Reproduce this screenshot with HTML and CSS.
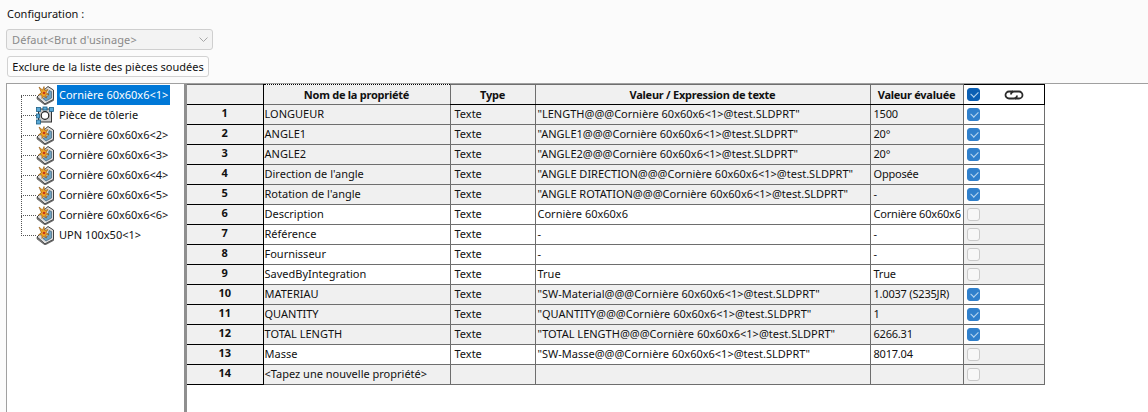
FILE: index.html
```html
<!DOCTYPE html>
<html lang="fr">
<head>
  <meta charset="UTF-8">
  <title>Propriétés de la liste des pièces soudées</title>
  <link rel="stylesheet" href="styles.css">
</head>
<body>
  <svg class="defs" width="0" height="0">
    <symbol id="weld" viewBox="0 0 20 20">
      <path d="M1 12 L9 19 L17.500 14.500 L17.500 5 L12 1.500 L8 5 Z" fill="#dcdcdc" stroke="#3f3f3f" stroke-width="1"/>
      <path d="M13 5.500 L15.500 6.500 L15.500 13 L10 16 L7 13.500 L12 11 Z" fill="#6fa3c2" stroke="#35566c" stroke-width=".6"/>
      <path d="M1 12 L1 14 L9 20 L17.500 15.500 L17.500 14.500 L9 19 Z" fill="#8a8a8a" stroke="#3f3f3f" stroke-width=".6"/>
      <path d="M3 2 L6.500 5 L8 1.500 L8.800 5.500 L12 4.500 L10 7.500 L13 9.500 L9.800 9.800 L10.500 13 L8 11 L6 13.500 L5.800 10 L2.500 10 L5.300 7.500 Z" fill="#f0a426" stroke="#8f5410" stroke-width=".6"/>
      <circle cx="8" cy="8" r="1.300" fill="#c33a1c"/>
    </symbol>
    <symbol id="sheet" viewBox="0 0 20 20">
      <rect x="2.500" y="4" width="13" height="13" fill="#c9c9c9" stroke="#333"/>
      <circle cx="9" cy="10.500" r="3.800" fill="#fff" stroke="#222" stroke-width="1.200"/>
      <g fill="#5aa8d6" stroke="#1d5f86" stroke-width=".8">
        <rect x=".5" y="2.500" width="4" height="4"/>
        <rect x="7" y="2" width="4" height="3"/>
        <rect x="13.500" y="2.500" width="4" height="4"/>
        <rect x=".5" y="9" width="3" height="4"/>
        <rect x=".5" y="15" width="4" height="4"/>
      </g>
    </symbol>
  </svg>

  <section class="config">
    <div class="config-label">Configuration :</div>
    <div class="select">
      <span>Défaut&lt;Brut d'usinage&gt;</span>
      <svg class="chevron" width="9" height="6" viewBox="0 0 9 6"><path d="M.5 .5 L4.500 4.500 L8.500 .5" fill="none" stroke="#a6a6a6"/></svg>
    </div>
    <button class="btn" type="button">Exclure de la liste des pièces soudées</button>
  </section>

  <main class="main">
    <ul class="tree">
      <li class="node first"><span class="branch"></span><svg class="icon"><use href="#weld"/></svg><span class="label selected">Cornière 60x60x6&lt;1&gt;</span></li>
      <li class="node"><span class="branch"></span><svg class="icon"><use href="#sheet"/></svg><span class="label">Pièce de tôlerie</span></li>
      <li class="node"><span class="branch"></span><svg class="icon"><use href="#weld"/></svg><span class="label">Cornière 60x60x6&lt;2&gt;</span></li>
      <li class="node"><span class="branch"></span><svg class="icon"><use href="#weld"/></svg><span class="label">Cornière 60x60x6&lt;3&gt;</span></li>
      <li class="node"><span class="branch"></span><svg class="icon"><use href="#weld"/></svg><span class="label">Cornière 60x60x6&lt;4&gt;</span></li>
      <li class="node"><span class="branch"></span><svg class="icon"><use href="#weld"/></svg><span class="label">Cornière 60x60x6&lt;5&gt;</span></li>
      <li class="node"><span class="branch"></span><svg class="icon"><use href="#weld"/></svg><span class="label">Cornière 60x60x6&lt;6&gt;</span></li>
      <li class="node last"><span class="branch"></span><svg class="icon"><use href="#weld"/></svg><span class="label">UPN 100x50&lt;1&gt;</span></li>
    </ul>

    <div class="splitter"></div>

    <div class="grid-wrap">
      <table class="grid">
        <colgroup>
          <col class="c-num"><col class="c-name"><col class="c-type"><col class="c-value"><col class="c-eval"><col class="c-check">
        </colgroup>
        <thead>
          <tr>
            <th class="num"></th>
            <th class="focus">Nom de la propriété</th>
            <th>Type</th>
            <th>Valeur / Expression de texte</th>
            <th>Valeur évaluée</th>
            <th class="check-head">
              <div class="check-head-in">
                <span class="box head-on"></span>
                <svg class="link" width="20" height="10" viewBox="0 0 20 10">
                  <path d="M9 1.500 H5 A3.500 3.500 0 0 0 5 8.500 H10 A3 3 0 0 0 13 5.500" fill="none" stroke="#2b2b2b" stroke-width="1.800"/>
                  <path d="M11 8.500 H15 A3.500 3.500 0 0 0 15 1.500 H10 A3 3 0 0 0 7 4.500" fill="none" stroke="#2b2b2b" stroke-width="1.800"/>
                </svg>
              </div>
            </th>
          </tr>
        </thead>
        <tbody>
          <tr class="on"><th class="num">1</th><td>LONGUEUR</td><td>Texte</td><td>"LENGTH@@@Cornière 60x60x6&lt;1&gt;@test.SLDPRT"</td><td>1500</td><td class="chk"><span class="box"></span></td></tr>
          <tr class="on"><th class="num">2</th><td>ANGLE1</td><td>Texte</td><td>"ANGLE1@@@Cornière 60x60x6&lt;1&gt;@test.SLDPRT"</td><td>20°</td><td class="chk"><span class="box"></span></td></tr>
          <tr class="on"><th class="num">3</th><td>ANGLE2</td><td>Texte</td><td>"ANGLE2@@@Cornière 60x60x6&lt;1&gt;@test.SLDPRT"</td><td>20°</td><td class="chk"><span class="box"></span></td></tr>
          <tr class="on"><th class="num">4</th><td>Direction de l'angle</td><td>Texte</td><td>"ANGLE DIRECTION@@@Cornière 60x60x6&lt;1&gt;@test.SLDPRT"</td><td>Opposée</td><td class="chk"><span class="box"></span></td></tr>
          <tr class="on"><th class="num">5</th><td>Rotation de l'angle</td><td>Texte</td><td>"ANGLE ROTATION@@@Cornière 60x60x6&lt;1&gt;@test.SLDPRT"</td><td>-</td><td class="chk"><span class="box"></span></td></tr>
          <tr class="off"><th class="num">6</th><td>Description</td><td>Texte</td><td>Cornière 60x60x6</td><td>Cornière 60x60x6</td><td class="chk"><span class="box"></span></td></tr>
          <tr class="off"><th class="num">7</th><td>Référence</td><td>Texte</td><td>-</td><td>-</td><td class="chk"><span class="box"></span></td></tr>
          <tr class="off"><th class="num">8</th><td>Fournisseur</td><td>Texte</td><td>-</td><td>-</td><td class="chk"><span class="box"></span></td></tr>
          <tr class="off"><th class="num">9</th><td>SavedByIntegration</td><td>Texte</td><td>True</td><td>True</td><td class="chk"><span class="box"></span></td></tr>
          <tr class="on"><th class="num">10</th><td>MATERIAU</td><td>Texte</td><td>"SW-Material@@@Cornière 60x60x6&lt;1&gt;@test.SLDPRT"</td><td>1.0037 (S235JR)</td><td class="chk"><span class="box"></span></td></tr>
          <tr class="on"><th class="num">11</th><td>QUANTITY</td><td>Texte</td><td>"QUANTITY@@@Cornière 60x60x6&lt;1&gt;@test.SLDPRT"</td><td>1</td><td class="chk"><span class="box"></span></td></tr>
          <tr class="on"><th class="num">12</th><td>TOTAL LENGTH</td><td>Texte</td><td>"TOTAL LENGTH@@@Cornière 60x60x6&lt;1&gt;@test.SLDPRT"</td><td>6266.31</td><td class="chk"><span class="box"></span></td></tr>
          <tr class="off"><th class="num">13</th><td>Masse</td><td>Texte</td><td>"SW-Masse@@@Cornière 60x60x6&lt;1&gt;@test.SLDPRT"</td><td>8017.04</td><td class="chk"><span class="box"></span></td></tr>
          <tr class="new"><th class="num">14</th><td>&lt;Tapez une nouvelle propriété&gt;</td><td></td><td></td><td></td><td class="chk"><span class="box"></span></td></tr>
        </tbody>
      </table>
    </div>
  </main>
</body>
</html>
```

FILE: styles.css
```css
* {
  margin: 0;
  padding: 0;
  box-sizing: border-box;
}

body {
  font-family: "Noto Sans", "Open Sans", Arial, sans-serif;
  font-size: 11px;
  color: #111;
  background-color: #fbfbfb;
  height: 412px;
  overflow: hidden;
}

.defs {
  display: block;
  height: 0;
}

/* top part */
.config {
  height: 83px;
  padding: 6px 0 0 7px;
}

.config-label {
  height: 17px;
  line-height: 16px;
}

.select {
  width: 207px;
  height: 21px;
  margin: 6px 0 0 -1px;
  padding: 0 4px 0 5px;
  display: flex;
  align-items: center;
  justify-content: space-between;
  background-color: #f3f3f3;
  border: 1px solid #cfcfcf;
  border-radius: 3px;
  color: #8a8a8a;
  letter-spacing: 0.1px;
}

.btn {
  display: block;
  width: 202px;
  height: 21px;
  margin-top: 6px;
  font: inherit;
  color: #111;
  background-color: #fdfdfd;
  border: 1px solid #d2d2d2;
  border-radius: 3px;
}

/* tree + table */
.main {
  display: flex;
  height: 329px;
  margin-left: 6px;
  background-color: #fff;
  border-top: 1px solid #a0a0a0;
}

.tree {
  width: 178px;
  padding: 1px 0 0 14px;
  list-style: none;
  border-left: 1px solid #a0a0a0;
}

.node {
  display: flex;
  align-items: center;
  height: 20px;
}

.branch {
  width: 15px;
  height: 20px;
}

.branch::before,
.branch::after {
  content: "";
  display: block;
  height: 10px;
  border-left: 1px dotted #555;
}

.branch::before {
  border-bottom: 1px dotted #555;
}

.first .branch::before,
.last .branch::after {
  border-left: none;
}

.icon {
  width: 20px;
  height: 20px;
  flex: none;
}

.label {
  height: 20px;
  margin-left: 1px;
  padding: 0 2px;
  line-height: 19px;
  white-space: nowrap;
}

.selected {
  width: 113px;
  background-color: #0078d7;
  color: #fff;
}

.splitter {
  width: 3px;
  background-color: #8f8f8f;
}

.grid-wrap {
  flex: 1;
}

.grid {
  width: 857px;
  table-layout: fixed;
  border-collapse: collapse;
}

.c-num { width: 76px; }
.c-name { width: 187px; }
.c-type { width: 85px; }
.c-value { width: 335px; }
.c-eval { width: 93px; }
.c-check { width: 81px; }

.grid th,
.grid td {
  height: 20px;
  padding: 0 0 2px 2px;
  line-height: 14px;
  border: 1px solid #6e6e6e;
  white-space: nowrap;
  overflow: hidden;
  font-weight: normal;
  text-align: left;
}

.grid td:nth-child(2) {
  padding-left: 1px;
}

.grid td:nth-child(3) {
  padding-left: 4px;
}

.grid td:nth-child(5) {
  padding-left: 3px;
  letter-spacing: -0.2px;
}

.grid thead th {
  padding: 0;
  font-weight: bold;
  letter-spacing: -0.25px;
  text-align: center;
  background-color: #f0f0f0;
  border-bottom: 1px solid #000;
  border-top: 1px solid #6e6e6e;
}

.grid thead .focus {
  border: 1px dotted #000;
}

.grid .num {
  padding-left: 0;
  padding-bottom: 4px;
  font-weight: bold;
  text-align: center;
  background-color: #f0f0f0;
  border-left: none;
  border-right: 1px solid #000;
  border-bottom: 1px solid #000;
}

.grid thead .check-head {
  padding: 0 0 0 3px;
  background-color: #fff;
  border: 1px solid #000;
}

.check-head-in {
  display: flex;
  align-items: center;
  gap: 24px;
}

.link {
  display: block;
}

.on td {
  background-color: #f0f0f0;
}

.off td {
  background-color: #fff;
}

.new td {
  background-color: #f0f0f0;
}

.grid .chk {
  padding: 0 0 0 3px;
}

.on .chk {
  background-color: #fff;
}

.off .chk,
.new .chk {
  background-color: #f0f0f0;
}

.box {
  display: block;
  width: 13px;
  height: 13px;
  background-color: #f7f7f7;
  border: 1px solid #c9c9c9;
  border-radius: 3px;
}

.on .box,
.head-on {
  position: relative;
  background-color: #3080cc;
  border-color: #3080cc;
}

.head-on {
  background-color: #0a5fb4;
  border-color: #0a5fb4;
}

.on .box::after,
.head-on::after {
  content: "";
  position: absolute;
  left: 3px;
  top: 2px;
  width: 6px;
  height: 4px;
  border-left: 1px solid #bcd8f0;
  border-bottom: 1px solid #bcd8f0;
  transform: rotate(-45deg);
}
```
